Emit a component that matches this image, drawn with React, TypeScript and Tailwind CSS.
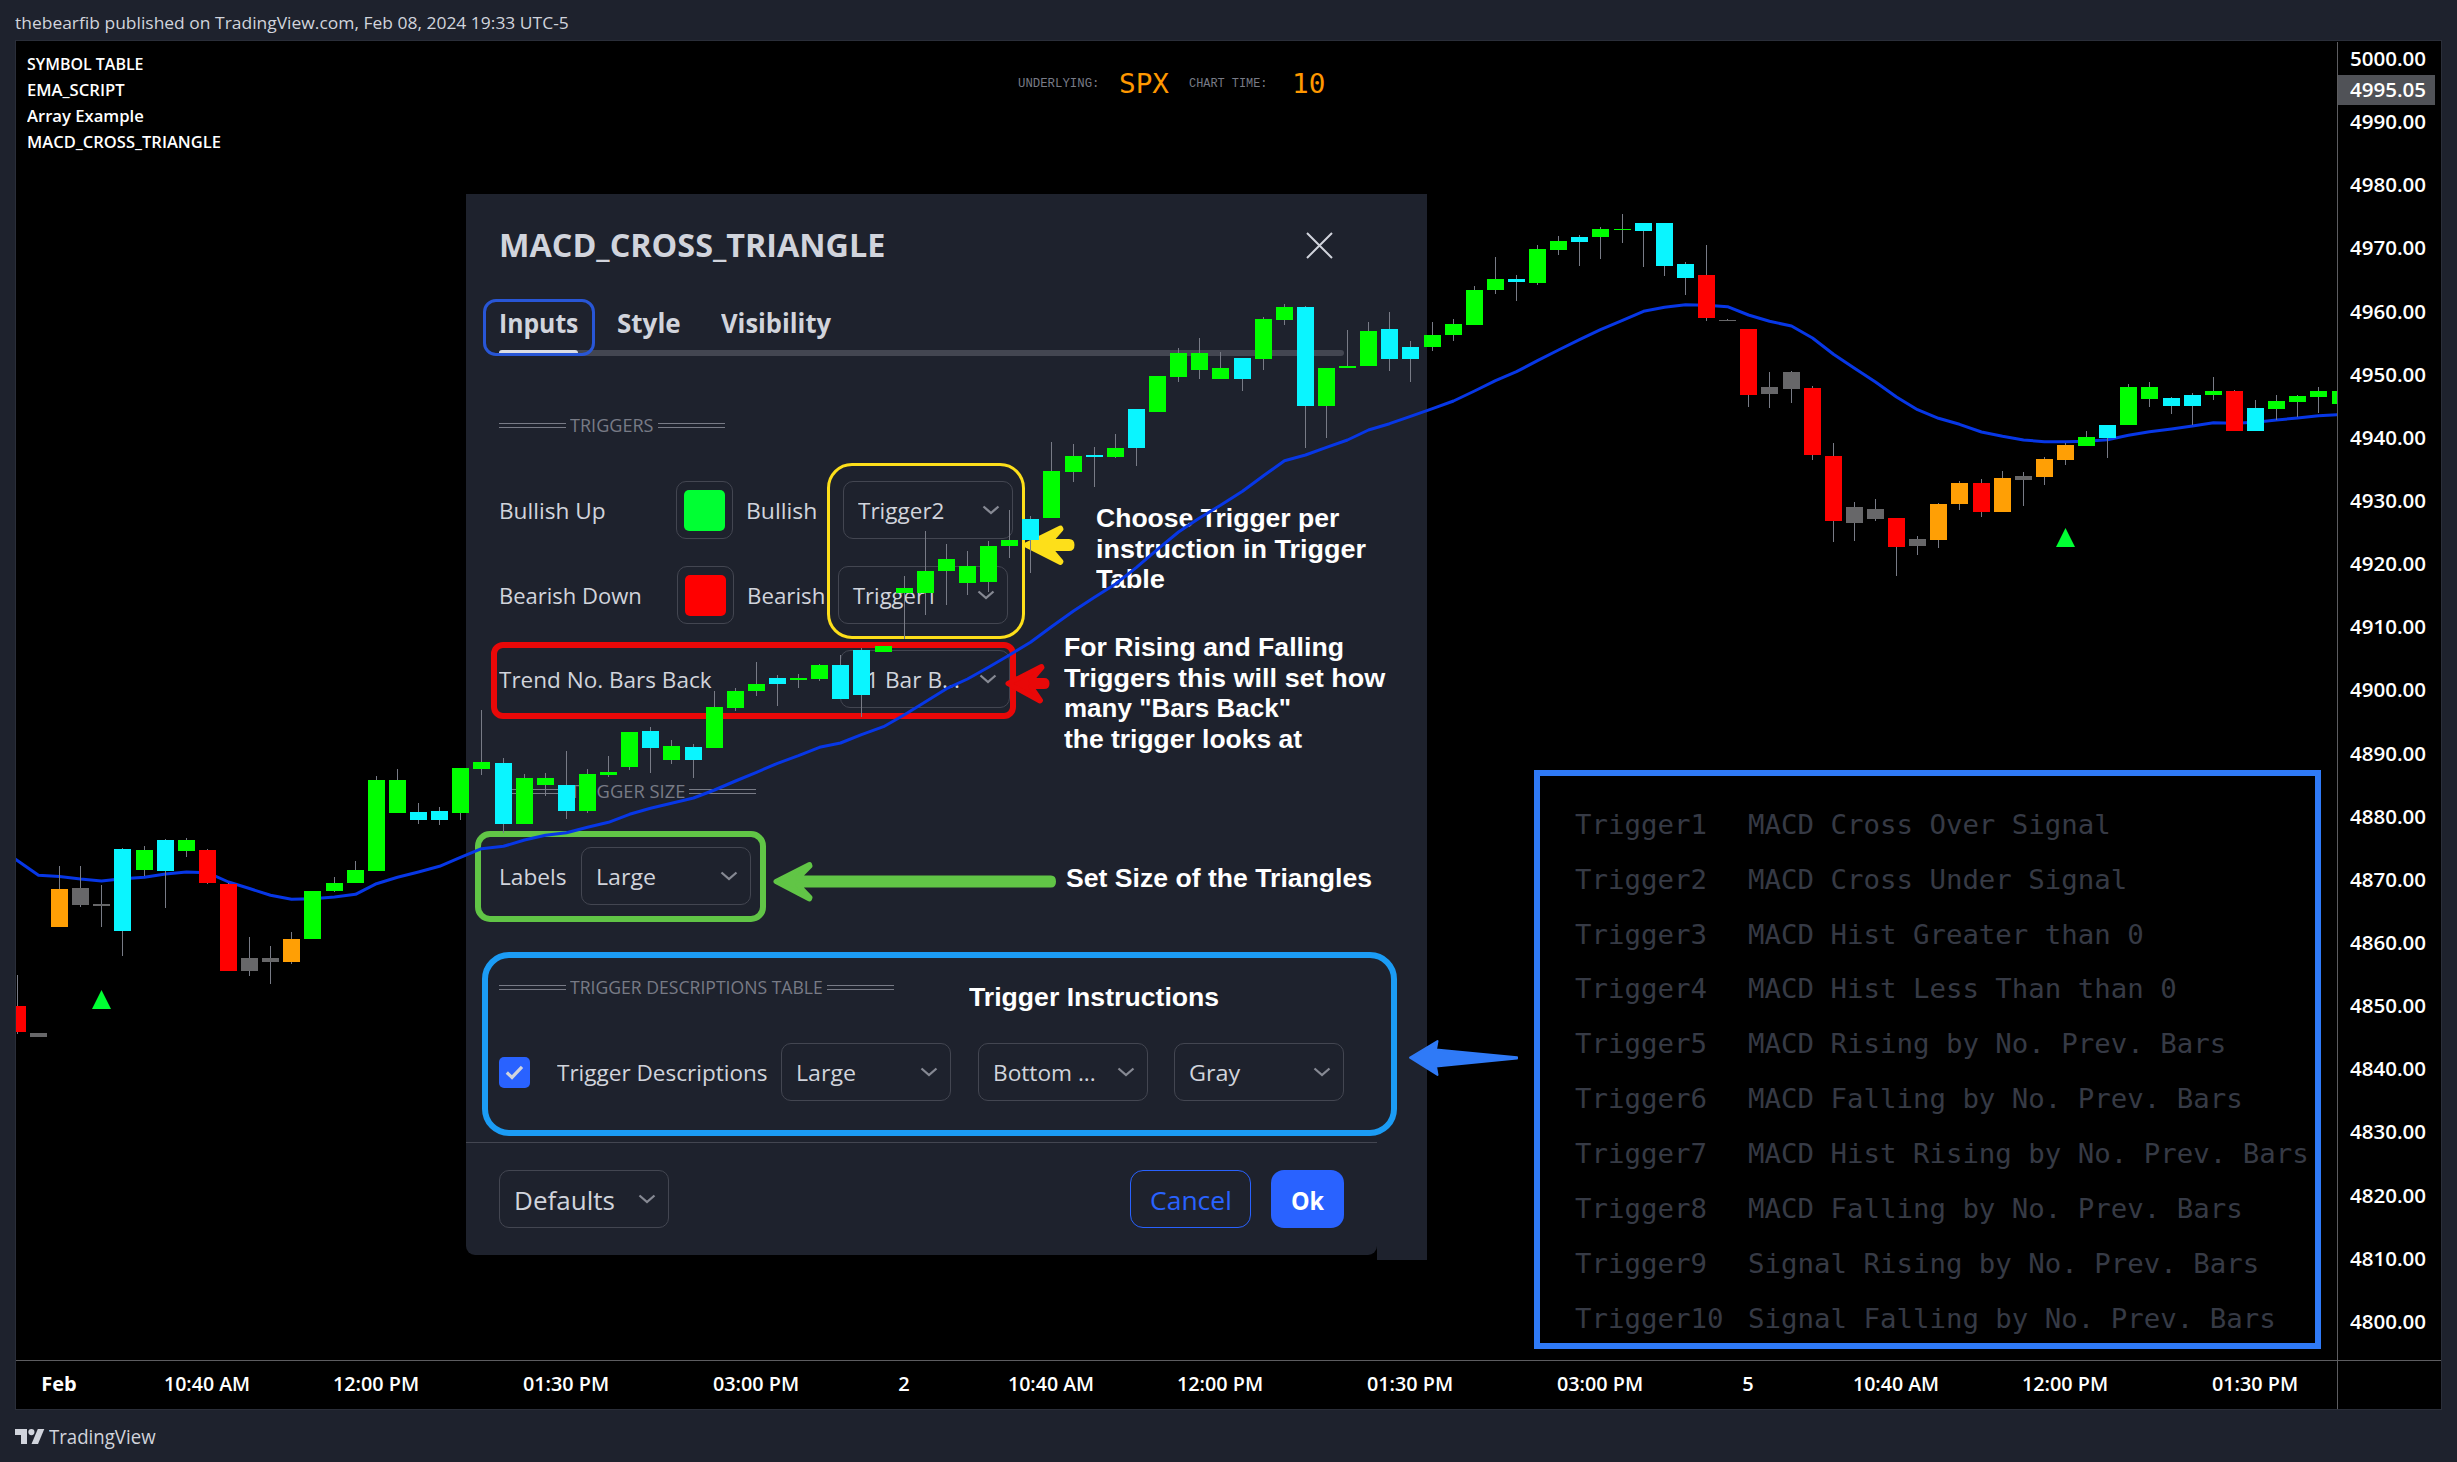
import { useLayoutEffect, useRef, type ReactNode } from "react";

/* ---------- helpers ---------- */

/** Stretches one line of text to the width of its box. */
function Fit({ className, children }: { className: string; children: ReactNode }) {
  const box = useRef<HTMLSpanElement>(null);
  const text = useRef<HTMLSpanElement>(null);
  useLayoutEffect(() => {
    if (box.current && text.current) {
      text.current.style.transform = `scaleX(${box.current.clientWidth / text.current.offsetWidth})`;
    }
  });
  return (
    <span ref={box} className={`block shrink-0 ${className}`}>
      <span ref={text} className="inline-block origin-left whitespace-pre">
        {children}
      </span>
    </span>
  );
}

const barX = (i: number) => Math.floor(17.36 + i * 21.115);

/* ---------- chart data ---------- */

const COLORS = { G: "#00ff00", C: "#0af5ff", R: "#ff0000", O: "#ff9f05", Y: "#676769" };

// [colour, body top, body bottom, wick top, wick bottom]
type Candle = [keyof typeof COLORS, number, number, number, number];

const CANDLES: Candle[] = [
  ["R", 1006, 1032, 975, 1034], ["Y", 1033, 1037, 1033, 1037], ["O", 889, 927, 866, 927],
  ["Y", 888, 905, 866, 907], ["Y", 904, 906, 885, 927], ["C", 849, 931, 848, 956],
  ["G", 850, 870, 846, 876], ["C", 840, 871, 839, 908], ["G", 840, 851, 838, 857],
  ["R", 850, 883, 849, 884], ["R", 884, 971, 883, 971], ["Y", 958, 971, 937, 976],
  ["Y", 958, 962, 946, 984], ["O", 939, 962, 932, 964], ["G", 891, 939, 891, 939],
  ["G", 883, 891, 877, 892], ["G", 870, 883, 861, 883], ["G", 780, 871, 776, 871],
  ["G", 780, 813, 769, 813], ["C", 812, 820, 803, 824], ["C", 811, 820, 807, 825],
  ["G", 768, 813, 768, 820], ["G", 762, 769, 710, 775], ["C", 763, 824, 758, 833],
  ["G", 778, 824, 774, 824], ["G", 778, 785, 773, 796], ["C", 785, 811, 751, 819],
  ["G", 774, 811, 769, 813], ["G", 772, 775, 756, 777], ["G", 732, 767, 732, 770],
  ["C", 731, 748, 727, 773], ["G", 746, 760, 740, 764], ["C", 747, 760, 744, 778],
  ["G", 707, 748, 691, 748], ["G", 691, 708, 688, 711], ["G", 684, 691, 662, 696],
  ["C", 678, 684, 675, 706], ["G", 678, 680, 674, 688], ["G", 665, 679, 664, 681],
  ["C", 665, 699, 655, 699], ["C", 650, 695, 648, 717], ["G", 646, 652, 646, 652],
  ["G", 588, 593, 576, 639], ["G", 571, 593, 531, 615], ["G", 559, 571, 544, 605],
  ["G", 566, 583, 551, 595], ["G", 546, 582, 541, 592], ["G", 540, 546, 510, 558],
  ["C", 519, 540, 516, 573], ["G", 471, 518, 442, 518], ["G", 456, 472, 444, 482],
  ["C", 455, 457, 447, 487], ["G", 448, 457, 434, 458], ["C", 409, 448, 409, 466],
  ["G", 376, 412, 376, 412], ["G", 353, 377, 348, 382], ["G", 353, 370, 338, 379],
  ["G", 368, 379, 352, 379], ["C", 358, 379, 358, 391], ["G", 319, 359, 317, 370],
  ["G", 307, 320, 304, 325], ["C", 307, 406, 306, 448], ["G", 368, 406, 368, 438],
  ["G", 366, 368, 330, 368], ["G", 331, 366, 322, 366], ["C", 329, 359, 312, 371],
  ["C", 347, 359, 341, 382], ["G", 335, 347, 322, 351], ["G", 324, 335, 319, 341],
  ["G", 290, 325, 286, 325], ["G", 279, 290, 257, 294], ["C", 279, 282, 275, 301],
  ["G", 249, 283, 245, 285], ["G", 241, 250, 236, 255], ["C", 237, 242, 235, 266],
  ["G", 229, 237, 227, 259], ["G", 229, 230, 214, 243], ["C", 223, 231, 223, 267],
  ["C", 223, 266, 223, 276], ["C", 264, 278, 262, 295], ["R", 275, 318, 245, 321],
  ["Y", 320, 321, 319, 321], ["R", 329, 395, 329, 407], ["Y", 387, 394, 372, 408],
  ["Y", 372, 389, 371, 403], ["R", 388, 455, 386, 460], ["R", 456, 521, 443, 542],
  ["Y", 507, 523, 502, 541], ["Y", 509, 519, 499, 521], ["R", 518, 547, 518, 576],
  ["Y", 539, 546, 536, 555], ["O", 504, 540, 503, 548], ["O", 483, 504, 481, 510],
  ["R", 483, 512, 479, 517], ["O", 478, 512, 471, 512], ["Y", 476, 480, 472, 506],
  ["O", 459, 477, 457, 485], ["O", 445, 460, 443, 465], ["G", 437, 446, 431, 446],
  ["C", 425, 438, 425, 458], ["G", 387, 425, 384, 425], ["G", 387, 399, 382, 407],
  ["C", 398, 406, 397, 414], ["C", 395, 406, 393, 425], ["G", 391, 395, 377, 400],
  ["R", 391, 431, 390, 431], ["C", 408, 431, 400, 431], ["G", 401, 409, 395, 420],
  ["G", 396, 402, 395, 417], ["G", 391, 397, 387, 413], ["G", 391, 404, 391, 404],
];

const EMA = [
  859, 875.3, 876.5, 879, 881, 878.7, 877.3, 874, 872, 872.7, 882, 888.5, 895.3, 899.3, 898.7, 897,
  894.3, 883.7, 877.3, 872, 866.3, 857.3, 848.7, 846.3, 840, 835.3, 832.7, 827.3, 822.3, 814.3,
  808.3, 803.3, 798, 790, 781, 772.3, 763.3, 755.7, 747.3, 743, 734.7, 726.7, 714.7, 701.7, 688.7,
  679, 667.3, 655, 642.3, 626.7, 611, 597.3, 584, 567.3, 549.3, 532, 518, 505.3, 491.3, 475.7,
  460.7, 455, 447.3, 440, 430, 423.7, 416.3, 408.7, 401, 391, 380.7, 371.7, 360.7, 350, 339.7,
  329.7, 320.3, 311.3, 307.3, 304.7, 305.3, 306.7, 315, 321.3, 326, 338, 354.3, 368.3, 382, 397,
  409.7, 418.3, 424.3, 432, 436.3, 440, 441.7, 441.7, 441.3, 439.7, 435.3, 431.7, 429, 426, 422.7,
  423.3, 422.3, 420, 418, 415.7, 414.7,
];

const TIMES: [number, string][] = [
  [2, "Feb"], [9, "10:40 AM"], [17, "12:00 PM"], [26, "01:30 PM"], [35, "03:00 PM"], [42, "2"],
  [49, "10:40 AM"], [57, "12:00 PM"], [66, "01:30 PM"], [75, "03:00 PM"], [82, "5"],
  [89, "10:40 AM"], [97, "12:00 PM"], [106, "01:30 PM"],
];

const PRICES = Array.from({ length: 21 }, (_, i) => `${5000 - i * 10}.00`);

const TRIGGERS = [
  "MACD Cross Over Signal",
  "MACD Cross Under Signal",
  "MACD Hist Greater than 0",
  "MACD Hist Less Than than 0",
  "MACD Rising by No. Prev. Bars",
  "MACD Falling by No. Prev. Bars",
  "MACD Hist Rising by No. Prev. Bars",
  "MACD Falling by No. Prev. Bars",
  "Signal Rising by No. Prev. Bars",
  "Signal Falling by No. Prev. Bars",
];

function PriceSeries() {
  const line = EMA.map((y, i) => `${i === 0 ? 15 : barX(i) + 0.5},${y}`).join(" ");
  return (
    <svg className="absolute top-0 left-0" width="2457" height="1462" viewBox="0 0 2457 1462">
      <clipPath id="plot">
        <rect x="16" y="42" width="2321" height="1319" />
      </clipPath>
      <g clipPath="url(#plot)">
        <polyline points={line} fill="none" stroke="#0737e6" strokeWidth="3" strokeLinejoin="round" />
        <g shapeRendering="crispEdges">
          {CANDLES.map(([c, top, bottom, high, low], i) => (
            <g key={i}>
              <rect x={barX(i)} y={high} width="1" height={low - high} fill="#787b86" />
              <rect x={barX(i) - 8} y={top} width="17" height={bottom - top} fill={COLORS[c]} />
            </g>
          ))}
        </g>
        <path d="M101.5 990 L111 1009 H92 Z" fill="#00ff33" />
        <path d="M2065.5 528 L2075 547 H2056 Z" fill="#00ff33" />
      </g>
    </svg>
  );
}

/* ---------- settings dialog ---------- */

function Chevron({ className = "mr-[12px]" }: { className?: string }) {
  return (
    <svg className={`ml-auto shrink-0 ${className}`} width="18" height="10" viewBox="0 0 18 10" fill="none">
      <path d="M1.5 1.5 L9 8 L16.5 1.5" stroke="#868993" strokeWidth="2.3" />
    </svg>
  );
}

function Select({ label, width, className = "" }: { label: string; width: string; className?: string }) {
  return (
    <div
      className={`flex h-[58px] w-[170px] shrink-0 items-center rounded-[10px] border border-[#434651] pl-[14px] ${className}`}
    >
      <Fit className={width}>{label}</Fit>
      <Chevron />
    </div>
  );
}

function Swatch({ className, fill }: { className: string; fill: string }) {
  return (
    <div
      className={`flex h-[58px] w-[57px] shrink-0 items-center justify-center rounded-[10px] border border-[#434651] ${className}`}
    >
      <div className={`size-[41px] rounded-[5px] ${fill}`} />
    </div>
  );
}

function SectionTitle({ label, width, className }: { label: string; width: string; className: string }) {
  return (
    <div className={`flex h-[20px] items-center gap-[4px] pb-[2px] text-[18.5px] leading-none font-medium text-[#787b86] ${className}`}>
      <div className="h-[5px] w-[67px] border-y border-[#787b86]" />
      <Fit className={width}>{label}</Fit>
      <div className="h-[5px] w-[67px] border-y border-[#787b86]" />
    </div>
  );
}

function SettingsDialog() {
  return (
    <div className="absolute top-[194px] left-[466px] flex h-[1066px] w-[961px] items-start text-[22px] leading-none font-medium text-[#d1d4dc]">
      <div className="flex h-[1061px] w-[911px] flex-col rounded-b-[9px] bg-[#1e222d]">
        <div className="flex h-[101px] items-center pl-[33px]">
          <Fit className="w-[386px] text-[32px] font-bold">MACD_CROSS_TRIANGLE</Fit>
          <svg className="mt-[1px] ml-[421px]" width="27" height="27" viewBox="0 0 27 27" fill="none">
            <path d="M1 1 L26 26 M26 1 L1 26" stroke="#d1d4dc" strokeWidth="2" />
          </svg>
        </div>
        <div className="flex h-[55px] items-center pl-[33px] text-[26px] font-bold">
          <div className="relative">
            <Fit className="w-[79px]">Inputs</Fit>
            <div className="absolute -top-[11px] -left-[16px] z-10 h-[57px] w-[112px] rounded-[13px] border-[3px] border-[#2856d6]" />
          </div>
          <Fit className="ml-[39px] w-[64px]">Style</Fit>
          <Fit className="ml-[40px] w-[110px]">Visibility</Fit>
        </div>
        <div className="ml-[33px] h-[6px] w-[845px] rounded-[3px] bg-[#434651]">
          <div className="h-[5px] w-[79px] rounded-t-[3px] bg-[#dbdde4]" />
        </div>

        <SectionTitle label="TRIGGERS" width="w-[84px]" className="mt-[60px] ml-[33px]" />
        <div className="mt-[45px] flex h-[58px] items-center pl-[33px]">
          <Fit className="w-[107px]">Bullish Up</Fit>
          <Swatch className="ml-[70px]" fill="bg-[#00ff33]" />
          <Fit className="ml-[13px] w-[71px]">Bullish</Fit>
          <Select className="ml-[26px]" width="w-[86px]" label="Trigger2" />
        </div>
        <div className="mt-[27px] flex h-[58px] items-center pl-[33px]">
          <Fit className="w-[143px]">Bearish Down</Fit>
          <Swatch className="ml-[35px]" fill="bg-[#ff0000]" />
          <Fit className="ml-[13px] w-[78px]">Bearish</Fit>
          <Select className="ml-[13px]" width="w-[84px]" label="Trigger1" />
        </div>
        <div className="mt-[26px] flex h-[58px] items-center pl-[33px]">
          <Fit className="w-[213px]">Trend No. Bars Back</Fit>
          <Select className="ml-[128px] pl-[25px]" width="w-[94px]" label="1 Bar B..." />
        </div>

        <SectionTitle label="TRIGGER SIZE" width="w-[115px]" className="mt-[74px] ml-[33px]" />
        <div className="mt-[45px] flex h-[58px] items-center pl-[33px]">
          <Fit className="w-[68px]">Labels</Fit>
          <Select className="ml-[14px]" width="w-[60px]" label="Large" />
        </div>

        <SectionTitle label="TRIGGER DESCRIPTIONS TABLE" width="w-[253px]" className="mt-[73px] ml-[33px]" />
        <div className="mt-[45px] flex h-[58px] items-center pl-[33px]">
          <div className="flex size-[31px] items-center justify-center rounded-[5px] bg-[#2962ff]">
            <svg width="19" height="15" viewBox="0 0 19 15" fill="none">
              <path d="M1.8 7.5 L7 12.4 L17 1.8" stroke="#d1d4dc" strokeWidth="3.2" />
            </svg>
          </div>
          <Fit className="ml-[27px] w-[211px]">Trigger Descriptions</Fit>
          <Select className="ml-[13px] pl-[13px]" width="w-[60px]" label="Large" />
          <Select className="ml-[27px]" width="w-[103px]" label="Bottom ..." />
          <Select className="ml-[26px]" width="w-[51px]" label="Gray" />
        </div>

        <div className="mt-[41px] flex h-[86px] items-end border-t border-[#434651] pl-[33px] text-[25.5px] leading-[26px]">
          <div className="flex h-[58px] w-[170px] items-center rounded-[10px] border border-[#434651] pl-[14px]">
            <Fit className="w-[101px] pt-[2px] font-normal">Defaults</Fit>
            <Chevron />
          </div>
          <div className="ml-[461px] flex h-[58px] w-[121px] items-center justify-center rounded-[13px] border border-[#2962ff] text-[#2962ff]">
            <Fit className="w-[82px] pt-[2px] font-normal">Cancel</Fit>
          </div>
          <div className="ml-[20px] flex h-[58px] w-[73px] items-center justify-center rounded-[13px] bg-[#2962ff] font-bold text-white">
            <Fit className="w-[33px] pt-[2px]">Ok</Fit>
          </div>
        </div>
      </div>
      <div className="h-[1066px] w-[50px] bg-[#1e222d]" />
    </div>
  );
}

/* ---------- hand-placed notes over the chart ---------- */

function Annotations() {
  return (
    <div className="absolute inset-0 font-['Liberation_Sans',sans-serif] text-[26px] leading-[30.6px] font-bold text-white">
      <div className="absolute top-[463px] left-[827px] h-[176px] w-[198px] rounded-[25px] border-[3.5px] border-[#fddf1a]" />
      <div className="absolute top-[642px] left-[491px] h-[77px] w-[525px] rounded-[12px] border-[6px] border-[#e90808]" />
      <div className="absolute top-[831px] left-[475px] h-[91px] w-[291px] rounded-[15px] border-[6px] border-[#61c546]" />
      <div className="absolute top-[952px] left-[482px] h-[184px] w-[915px] rounded-[27px] border-[6px] border-[#1b9cf5]" />

      <svg className="absolute top-0 left-0" width="1600" height="1200" viewBox="0 0 1600 1200" strokeLinejoin="round">
        <path
          d="M1026 545 L1060.5 528 L1061 529 L1050 541.5 H1069 Q1072 541.5 1072 545 Q1072 548.5 1069 548.5 H1050 L1061 561.5 L1060.5 562.5 Z"
          fill="#fddf1a" stroke="#fddf1a" strokeWidth="5"
        />
        <path
          d="M1008 683.5 L1041.5 666.5 L1042 667.5 L1031 680.5 H1044 Q1047 680.5 1047 683.5 Q1047 686.5 1044 686.5 H1031 L1040.5 700.5 L1040 701 Z"
          fill="#e90808" stroke="#e90808" strokeWidth="5"
        />
        <path
          d="M776 881.5 L809.5 864.5 L810 866 L798 878 H1051 Q1053.5 878 1053.5 881.5 Q1053.5 885 1051 885 H798 L810 897.5 L809.5 899 Z"
          fill="#61c546" stroke="#61c546" strokeWidth="5"
        />
        <path
          d="M1410 1057.7 L1437.5 1041 L1436 1049.5 L1517 1057.2 V1058.4 L1436 1066.5 L1437.5 1075 Z"
          fill="#2f7af7" stroke="#2f7af7" strokeWidth="2"
        />
      </svg>

      <div className="absolute top-[503px] left-[1096px]">
        <Fit className="w-[243px]">Choose Trigger per</Fit>
        <Fit className="w-[270px]">instruction in Trigger</Fit>
        <Fit className="w-[69px]">Table</Fit>
      </div>
      <div className="absolute top-[632px] left-[1064px]">
        <Fit className="w-[280px]">For Rising and Falling</Fit>
        <Fit className="w-[321px]">Triggers this will set how</Fit>
        <Fit className="w-[227px]">many "Bars Back"</Fit>
        <Fit className="w-[238px]">the trigger looks at</Fit>
      </div>
      <Fit className="absolute top-[863px] left-[1066px] w-[306px]">Set Size of the Triangles</Fit>
      <Fit className="absolute top-[982px] left-[969px] w-[250px]">Trigger Instructions</Fit>
    </div>
  );
}

function TriggerTable() {
  return (
    <div className="absolute top-[770px] left-[1534px] h-[579px] w-[787px] border-[6px] border-[#2f7af7] pt-[21px] pl-[35px] font-['DejaVu_Sans_Mono',monospace] text-[27.4px] text-[#363a45]">
      {TRIGGERS.map((text, i) => (
        <div key={i} className="flex h-[54.9px] items-center whitespace-pre">
          <span className="w-[173px]">Trigger{i + 1}</span>
          <span>{text}</span>
        </div>
      ))}
    </div>
  );
}

/* ---------- page ---------- */

export default function App() {
  return (
    <div className="relative flex h-[1462px] w-[2457px] flex-col overflow-hidden bg-[#1e222d] font-['Open_Sans',sans-serif] leading-none">
      <header className="flex h-[40px] items-center pt-[6px] pl-[15px] text-[16.8px] font-medium text-[#d1d4dc]">
        <Fit className="w-[554px]">thebearfib published on TradingView.com, Feb 08, 2024 19:33 UTC-5</Fit>
      </header>

      <main className="mx-[15px] flex h-[1370px] w-[2427px] flex-col border border-[#2a2e39] bg-black pt-px text-white">
        <div className="flex h-[1319px]">
          <section className="relative flex w-[2321px] items-start">
            <div className="flex flex-col pt-[9px] pl-[11px] text-[16.8px] leading-[26px] font-semibold">
              <Fit className="w-[117px]">SYMBOL TABLE</Fit>
              <Fit className="w-[98px]">EMA_SCRIPT</Fit>
              <Fit className="w-[117px]">Array Example</Fit>
              <Fit className="w-[194px]">MACD_CROSS_TRIANGLE</Fit>
            </div>
            <div className="mt-[27px] ml-[797px] flex h-[30px] items-center text-[#ff9800]">
              <Fit className="w-[81px] pt-px font-['Liberation_Mono',monospace] text-[12.8px] text-[#787b86]">UNDERLYING:</Fit>
              <Fit className="ml-[20px] w-[50px] font-['DejaVu_Sans_Mono',monospace] text-[26px]">SPX</Fit>
              <Fit className="ml-[20px] w-[78px] pt-px font-['Liberation_Mono',monospace] text-[12.8px] text-[#787b86]">CHART TIME:</Fit>
              <Fit className="ml-[25px] w-[33px] font-['DejaVu_Sans_Mono',monospace] text-[26px]">10</Fit>
            </div>
          </section>
          <aside className="relative w-[104px] border-l border-[#5d5d60] text-[20px] font-semibold">
            <div className="mt-[7px] flex h-[1283px] flex-col justify-between pl-[12px]">
              {PRICES.map((price) => (
                <Fit key={price} className="h-[20px] w-[76px]">{price}</Fit>
              ))}
            </div>
            <div className="absolute top-[33px] left-0 flex h-[30px] w-[97px] items-center bg-[#505257] pl-[12px]">
              <Fit className="w-[76px]">4995.05</Fit>
            </div>
          </aside>
        </div>
        <div className="flex h-[49px] border-t border-[#5d5d60]">
          <div className="flex w-[2321px] items-center pb-[2px] text-[20px] font-semibold">
            {TIMES.map(([bar, label], i) => (
              <div
                key={bar}
                className="flex w-0 justify-center"
                style={{ marginLeft: barX(bar) - (i === 0 ? 16 : barX(TIMES[i - 1][0])) }}
              >
                {label.length === 8 ? (
                  <Fit className="w-[86px]">{label}</Fit>
                ) : (
                  <span className={label === "Feb" ? "font-bold" : ""}>{label}</span>
                )}
              </div>
            ))}
          </div>
          <div className="w-[104px] border-l border-[#5d5d60]" />
        </div>
      </main>

      <footer className="flex h-[52px] items-center gap-[4px] pl-[15px] text-[19.5px] text-[#d1d4dc]">
        <svg width="30" height="15" viewBox="0 0 30 15" fill="currentColor">
          <path d="M0 0 H12 V15 H6 V6 H0 Z" />
          <circle cx="16.4" cy="3.1" r="3.1" />
          <path d="M22.8 0 H29.3 L23 15 H16.5 Z" />
        </svg>
        <Fit className="w-[107px] pt-px font-medium">TradingView</Fit>
      </footer>

      <SettingsDialog />
      <Annotations />
      <TriggerTable />
      <PriceSeries />
    </div>
  );
}
